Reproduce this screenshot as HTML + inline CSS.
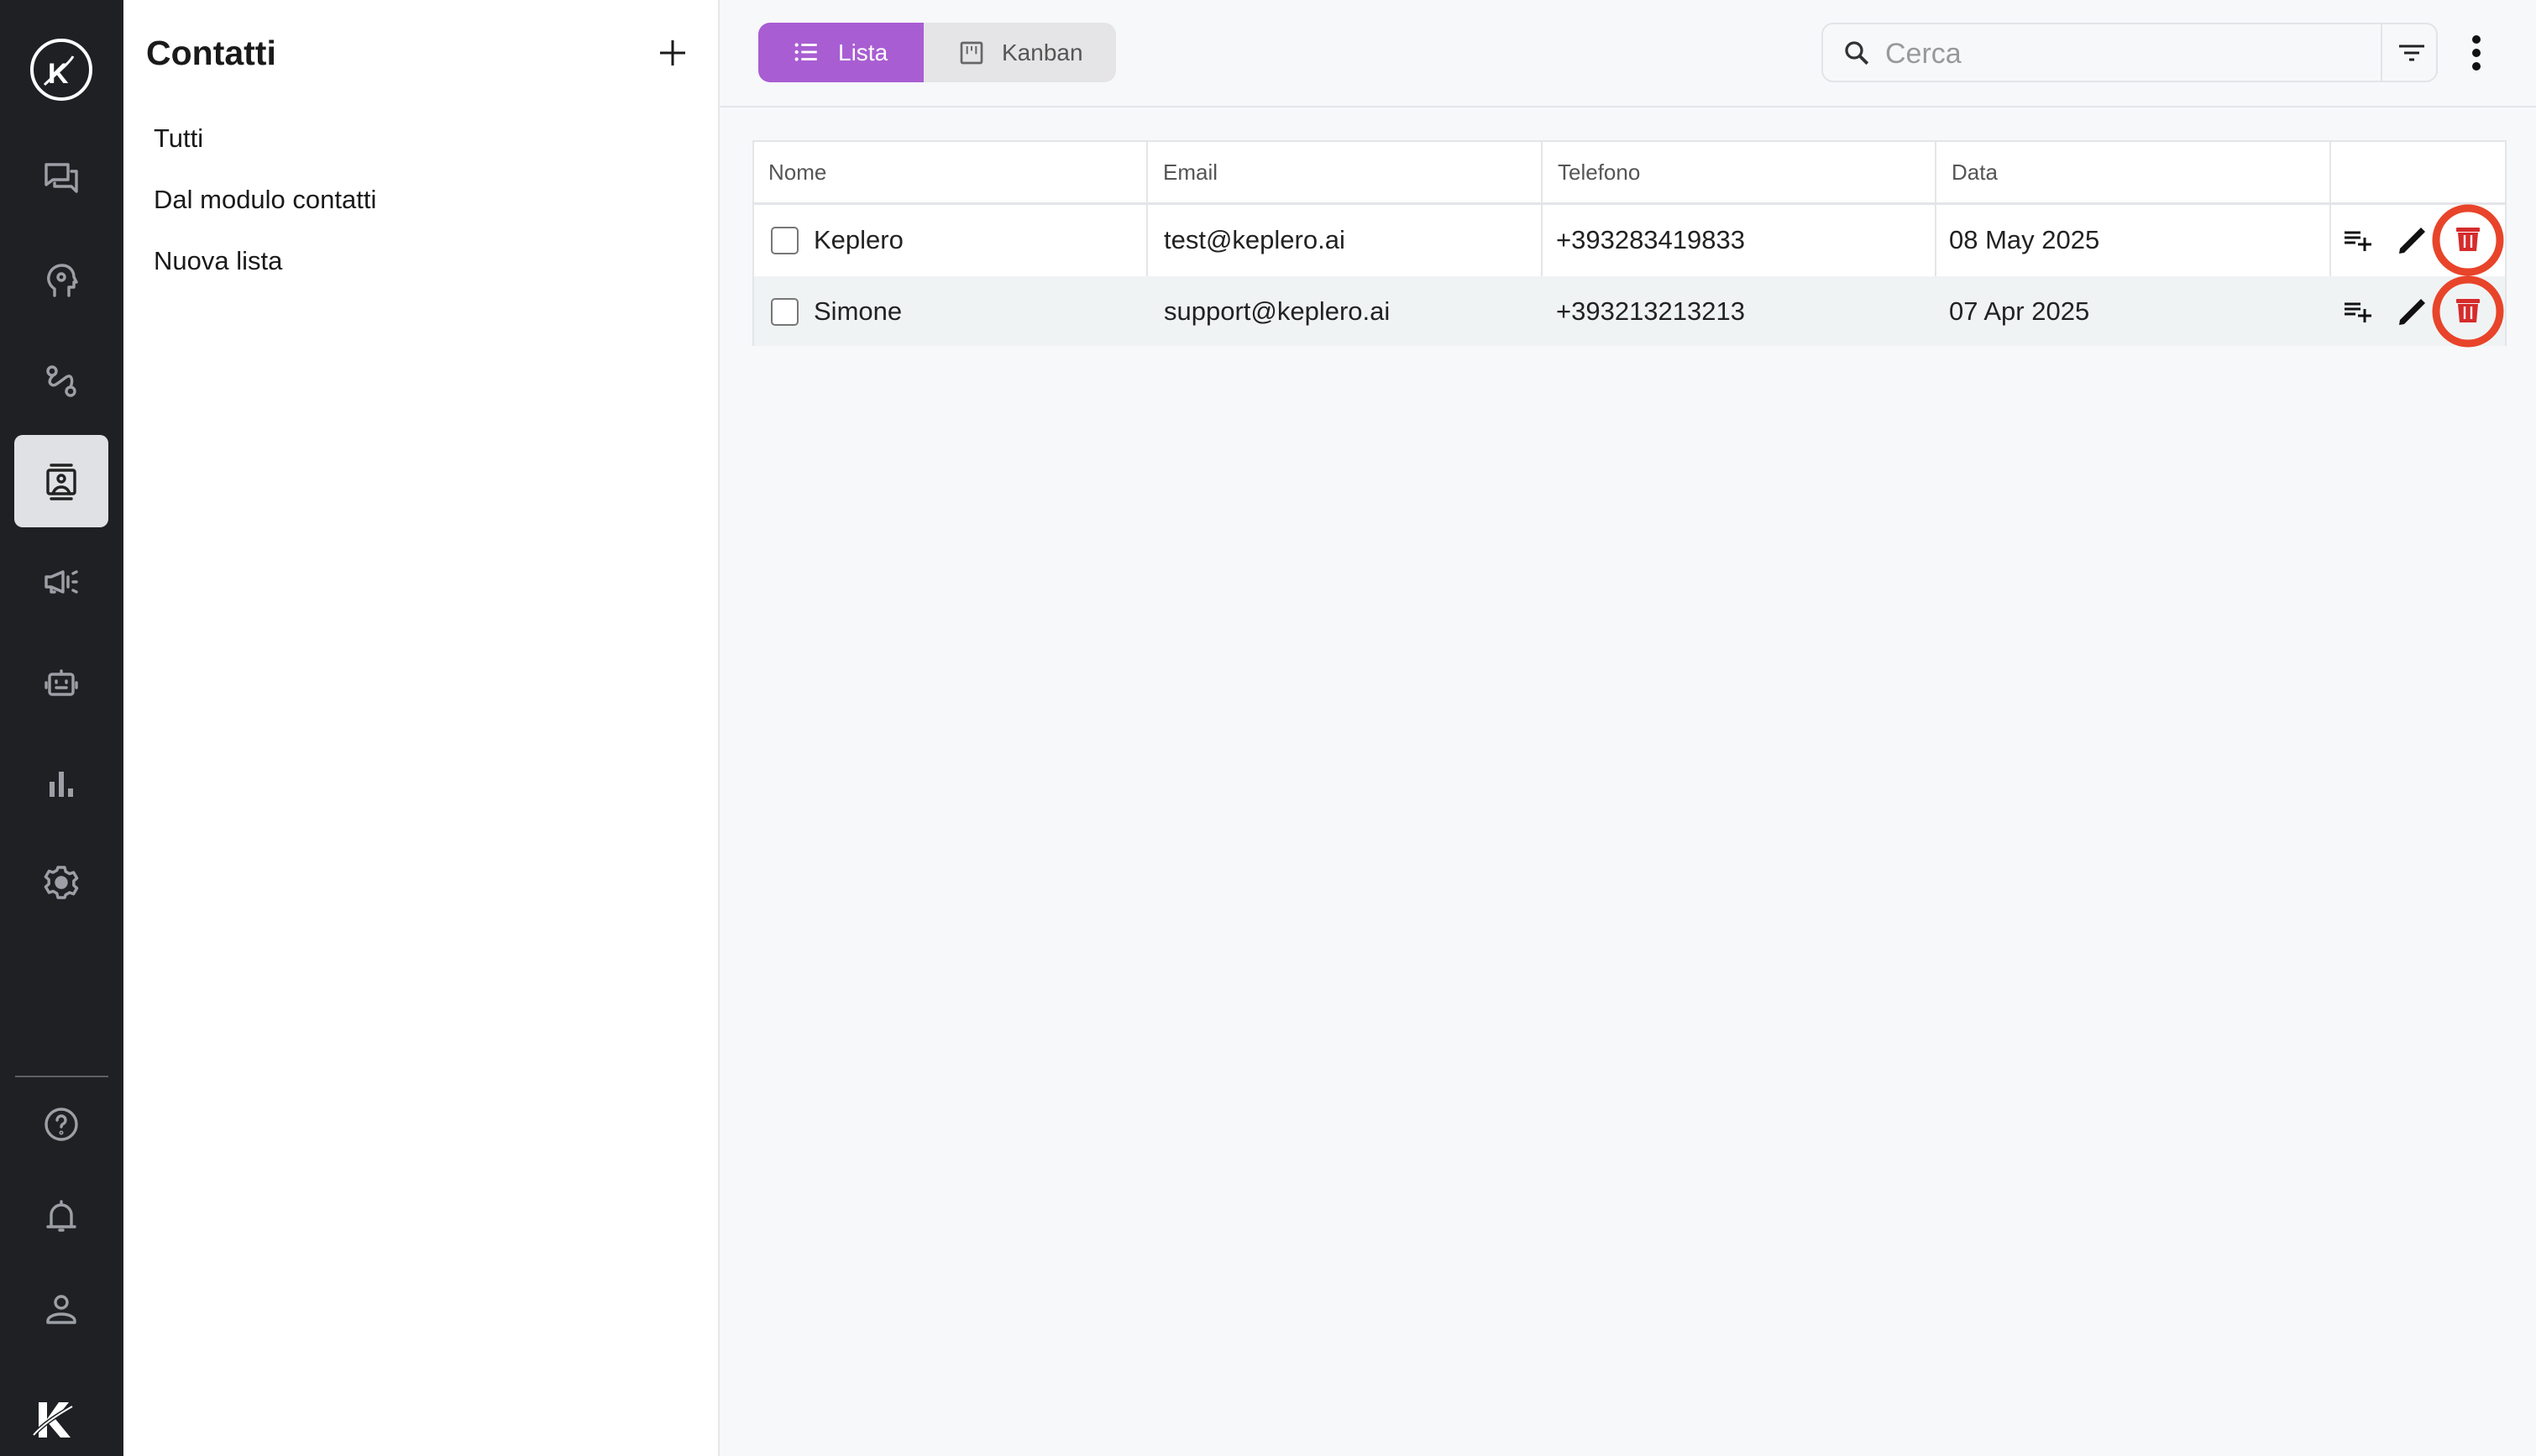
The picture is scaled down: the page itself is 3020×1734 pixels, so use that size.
<!DOCTYPE html>
<html><head><meta charset="utf-8"><style>
*{margin:0;padding:0;box-sizing:border-box}
body{width:3020px;height:1734px;position:relative;overflow:hidden;background:#f7f8fa;font-family:"Liberation Sans",sans-serif;color:#1a1a1a}
.abs{position:absolute}
.sb{left:0;top:0;width:147px;height:1734px;background:#1f2024}
.ic{position:absolute;left:49px;width:48px;height:48px}
.ic svg{width:48px;height:48px;fill:none;stroke:#9ca0a6;stroke-width:1.7;stroke-linecap:round;stroke-linejoin:round}
.p2{left:147px;top:0;width:710px;height:1734px;background:#fff;border-right:2px solid #e5e6e9}
.item{position:absolute;left:36px;font-size:31px}
.cell{position:absolute;font-size:31px;color:#222}
.hd{position:absolute;font-size:26px;color:#555;top:190px}
.vl{position:absolute;width:2px;background:#e4e5e8}
.cb{position:absolute;left:918px;width:33px;height:33px;border:2.5px solid #777;border-radius:5px;background:#fff}
</style></head><body>
<div class="abs sb">
 <svg class="abs" style="left:35px;top:45px" width="76" height="76" viewBox="0 0 76 76"><circle cx="38" cy="38" r="35" fill="#1f2024" stroke="#fff" stroke-width="4"/><text x="22" y="54" font-family="Liberation Sans" font-weight="bold" font-size="34" fill="#fff">K</text><path d="M18 56 C28 46 48 30 52 22" stroke="#fff" stroke-width="3" fill="none"/></svg>
 <div class="ic" style="top:188px"><svg viewBox="0 0 24 24"><path d="M3 4h13v9H7l-4 3z"/><path d="M18 8h3v12l-3-3H8v-2"/></svg></div>
 <div class="ic" style="top:310px"><svg viewBox="0 0 24 24"><path d="M8 21v-4C5 15 4 12 4.5 9.5 5.5 5 9 3 12.5 3 16.5 3 19.5 6 19.5 10l1.5 3h-1.5v3h-3v5"/><circle cx="12" cy="10" r="2"/></svg></div>
 <div class="ic" style="top:430px"><svg viewBox="0 0 24 24"><circle cx="6.5" cy="6" r="2.5"/><circle cx="17.5" cy="18" r="2.5"/><path d="M8.5 7.5C5 10 4 13 6.5 14.2 8 15 9.5 13.5 15 9.5c2.5-1.8 4.5 1 2.5 6"/></svg></div>
 <div class="abs" style="left:17px;top:518px;width:112px;height:110px;background:#e0e1e4;border-radius:10px"></div>
 <div class="ic" style="top:550px"><svg viewBox="0 0 24 24" style="stroke:#222"><path d="M6 2h12M6 22h12"/><rect x="4" y="5" width="16" height="14" rx="1"/><circle cx="12" cy="10" r="2"/><path d="M7 19c1-3 3-4 5-4s4 1 5 4"/></svg></div>
 <div class="ic" style="top:669px"><svg viewBox="0 0 24 24"><path d="M3 9h3l7-3v12l-7-3H3zM6 15v3h2M16 9v6M19 7l2-1M19 12h2M19 17l2 1"/></svg></div>
 <div class="ic" style="top:789px"><svg viewBox="0 0 24 24"><rect x="5" y="7" width="14" height="12" rx="1.5"/><path d="M12 5v2M3 12v3M21 12v3M9 11v1M15 11v1M9 15h6"/></svg></div>
 <div class="ic" style="top:909px"><svg viewBox="0 0 24 24" style="fill:#9ca0a6;stroke:none"><rect x="5" y="11" width="3" height="9"/><rect x="10.5" y="5" width="3" height="15"/><rect x="16" y="15" width="3" height="5"/></svg></div>
 <div class="ic" style="top:1027px"><svg viewBox="0 0 24 24"><circle cx="12" cy="12" r="3" fill="#9ca0a6"/><path d="M10 3h4l.6 2.5 2.3 1.3 2.4-.8 2 3.4-1.9 1.7v2.6l1.9 1.7-2 3.4-2.4-.8-2.3 1.3L14 21h-4l-.6-2.5-2.3-1.3-2.4.8-2-3.4 1.9-1.7v-2.6L2.7 8.6l2-3.4 2.4.8 2.3-1.3z"/></svg></div>
 <div class="abs" style="left:18px;top:1281px;width:111px;height:2px;background:#5d6066"></div>
 <div class="ic" style="top:1315px"><svg viewBox="0 0 24 24"><circle cx="12" cy="12" r="9"/><path d="M9.5 9.5a2.5 2.5 0 1 1 3.5 2.3c-.7.4-1 .9-1 1.7"/><circle cx="12" cy="17" r=".4"/></svg></div>
 <div class="ic" style="top:1425px"><svg viewBox="0 0 24 24"><path d="M4 18h16M6 18v-7a6 6 0 0 1 12 0v7M12 3v2M11 20h2"/></svg></div>
 <div class="ic" style="top:1535px"><svg viewBox="0 0 24 24"><circle cx="12" cy="8" r="3.5"/><path d="M4 19c0-2 3-4 8-4s8 2 8 4v1H4z"/></svg></div>
 <svg class="abs" style="left:36px;top:1665px" width="56" height="50" viewBox="0 0 56 50"><path d="M10 5h10v20l14-20h12L30 25l18 22H36L20 28v19H10z" fill="#fff"/><path d="M4 44C16 30 36 18 50 10" stroke="#1f2024" stroke-width="5" fill="none"/><path d="M4 44C16 30 36 18 50 10" stroke="#fff" stroke-width="2" fill="none"/></svg>
</div>
<div class="abs p2">
 <div class="abs" style="left:27px;top:40px;font-size:41px;font-weight:bold;color:#1a1a1a">Contatti</div>
 <svg class="abs" style="left:637px;top:46px" width="34" height="34" viewBox="0 0 34 34"><path d="M17 2v30M2 17h30" stroke="#1a1a1a" stroke-width="3"/></svg>
 <div class="item" style="top:147px">Tutti</div>
 <div class="item" style="top:220px">Dal modulo contatti</div>
 <div class="item" style="top:293px">Nuova lista</div>
</div>
<div class="abs" style="left:857px;top:126px;width:2163px;height:2px;background:#e4e5e8"></div>
<div class="abs" style="left:903px;top:27px;width:426px;height:71px;border-radius:14px;background:#e5e5e7;overflow:hidden">
 <div class="abs" style="left:0;top:0;width:197px;height:71px;background:#a95dd2"></div>
 <svg class="abs" style="left:40px;top:18px" width="34" height="34" viewBox="0 0 24 24"><g fill="#fff"><circle cx="4" cy="6" r="1.5"/><circle cx="4" cy="12" r="1.5"/><circle cx="4" cy="18" r="1.5"/><rect x="8" y="5" width="13" height="2"/><rect x="8" y="11" width="13" height="2"/><rect x="8" y="17" width="13" height="2"/></g></svg>
 <div class="abs" style="left:95px;top:20px;font-size:28px;color:#fff">Lista</div>
 <svg class="abs" style="left:238px;top:20px" width="32" height="32" viewBox="0 0 24 24"><rect x="3" y="3" width="18" height="18" rx="1" fill="none" stroke="#666" stroke-width="2"/><path d="M8 6v7M12 6v4M16 6v7" stroke="#666" stroke-width="1.5"/></svg>
 <div class="abs" style="left:290px;top:20px;font-size:28px;color:#555">Kanban</div>
</div>
<div class="abs" style="left:2169px;top:27px;width:734px;height:71px;border:2px solid #e3e4e7;border-radius:14px;background:#f7f8fa">
 <svg class="abs" style="left:22px;top:16px" width="36" height="36" viewBox="0 0 24 24"><circle cx="10" cy="10" r="6" fill="none" stroke="#333" stroke-width="2.2"/><path d="M14.5 14.5l6 6" stroke="#333" stroke-width="2.6"/></svg>
 <div class="abs" style="left:74px;top:16px;font-size:34px;color:#999">Cerca</div>
 <div class="abs" style="left:664px;top:0;width:2px;height:67px;background:#e3e4e7"></div>
 <svg class="abs" style="left:684px;top:20px" width="34" height="30" viewBox="0 0 34 30"><path d="M2 6h30M8 14h18M14 22h6" stroke="#222" stroke-width="3"/></svg>
</div>
<svg class="abs" style="left:2938px;top:40px" width="22" height="46" viewBox="0 0 22 46"><g fill="#111"><circle cx="11" cy="7" r="5"/><circle cx="11" cy="23" r="5"/><circle cx="11" cy="39" r="5"/></g></svg>
<div class="abs" style="left:896px;top:167px;width:2089px;height:245px;border:2px solid #e4e5e8;background:#fff"></div>
<div class="abs" style="left:898px;top:329px;width:2085px;height:83px;background:#f0f3f4"></div>
<div class="abs" style="left:896px;top:241px;width:2089px;height:3px;background:#e4e5e8"></div>
<div class="vl" style="left:1365px;top:167px;height:162px"></div>
<div class="vl" style="left:1835px;top:167px;height:162px"></div>
<div class="vl" style="left:2304px;top:167px;height:162px"></div>
<div class="vl" style="left:2774px;top:167px;height:162px"></div>
<div class="hd" style="left:915px">Nome</div>
<div class="hd" style="left:1385px">Email</div>
<div class="hd" style="left:1855px">Telefono</div>
<div class="hd" style="left:2324px">Data</div>
<div class="cb" style="top:270px"></div><div class="cb" style="top:355px"></div>
<div class="cell" style="left:969px;top:268px">Keplero</div>
<div class="cell" style="left:1386px;top:268px">test@keplero.ai</div>
<div class="cell" style="left:1853px;top:268px">+393283419833</div>
<div class="cell" style="left:2321px;top:268px">08 May 2025</div>
<div class="cell" style="left:969px;top:353px">Simone</div>
<div class="cell" style="left:1386px;top:353px">support@keplero.ai</div>
<div class="cell" style="left:1853px;top:353px">+393213213213</div>
<div class="cell" style="left:2321px;top:353px">07 Apr 2025</div>
<svg class="abs" style="left:2780px;top:230px" width="240" height="200" viewBox="0 0 240 200">
 <g id="r">
  <path d="M12 47h19M12 53h19M12 59h13M28 61h16M36 53v16" stroke="#111" stroke-width="3" fill="none"/>
  <path d="M78 66l25-25 5 5-25 25-6 1z" fill="#111"/>
  <rect x="145" y="41" width="28" height="5" rx="1" fill="#d62b2b"/>
  <path d="M147 47h24l-2 22h-20z" fill="#d62b2b"/>
  <path d="M155 50v15M163 50v15" stroke="#fff" stroke-width="2.4"/>
  <circle cx="159" cy="56" r="38" fill="none" stroke="#e8442a" stroke-width="9"/>
 </g>
 <use href="#r" y="85"/>
</svg>
</body></html>
